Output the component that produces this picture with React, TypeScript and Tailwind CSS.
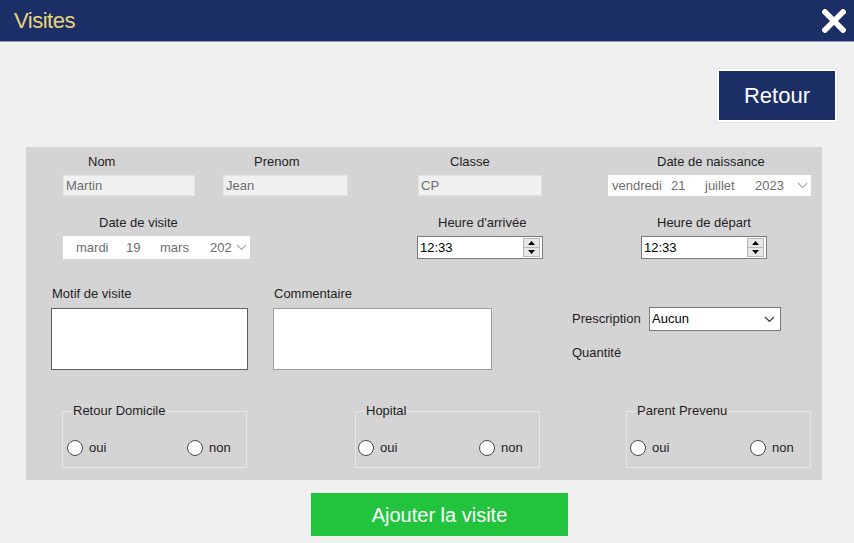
import React from 'react';

const font = { fontFamily: '"Liberation Sans", Arial, sans-serif' };

function Chevron({ className }: { className?: string }) {
  return (
    <svg width="11" height="7" viewBox="0 0 11 7" className={className}>
      <path d="M1 1l4.5 4.5L10 1" fill="none" stroke="currentColor" strokeWidth="1.1" />
    </svg>
  );
}

function Spinner() {
  return (
    <div className="flex flex-col w-[17px] h-[19px] border border-[#b9b9b9] bg-[#e6e6e6] mr-[2px]">
      <div className="flex-1 flex items-center justify-center border-b border-[#b9b9b9]">
        <svg width="7" height="4" viewBox="0 0 7 4"><path d="M0 4L3.5 0L7 4z" fill="#000" /></svg>
      </div>
      <div className="flex-1 flex items-center justify-center">
        <svg width="7" height="4" viewBox="0 0 7 4"><path d="M0 0L3.5 4L7 0z" fill="#000" /></svg>
      </div>
    </div>
  );
}

function Label({ children, pl }: { children: React.ReactNode; pl: string }) {
  return <div className={`h-[16px] leading-[16px] text-[13px] text-[#1e1e1e] whitespace-nowrap ${pl}`}>{children}</div>;
}

function ReadonlyBox({ value }: { value: string }) {
  return (
    <div className="mt-[5px] h-[21px] bg-[#f0f0f0] border border-[#e2e2e2] text-[13px] leading-[19px] pl-[2px] text-[#6d6d6d]">
      {value}
    </div>
  );
}

function Radio({ label }: { label: string }) {
  return (
    <div className="flex items-center gap-[6px] h-[16px]">
      <span className="w-[16px] h-[16px] rounded-full bg-white border border-[#4a4a4a]" />
      <span className="text-[13px] text-[#1e1e1e]">{label}</span>
    </div>
  );
}

function Groupe({ titre, ml, ouiX }: { titre: string; ml: string; ouiX: string }) {
  return (
    <fieldset className={`${ml} w-[185px] h-[65px] border border-[#e6e6e6]`}>
      <legend className="ml-[9px] px-[1px] text-[13px] leading-[16px] text-[#1e1e1e]">{titre}</legend>
      <div className="flex mt-[21px]">
        <div className={ouiX}><Radio label="oui" /></div>
        <Radio label="non" />
      </div>
    </fieldset>
  );
}

export default function App() {
  return (
    <div className="w-[854px] h-[543px] bg-[#f0f0f0] flex flex-col overflow-hidden" style={font}>
      {/* Barre de titre */}
      <div className="h-[42px] bg-[#1b2f66] border-b border-[#8d9bc0] flex items-center justify-between pl-[14px] pr-[8px] shrink-0">
        <span className="text-[22px] text-[#e9d37c] leading-none tracking-[-0.5px]">Visites</span>
        <svg width="24" height="24" viewBox="0 0 24 24">
          <path d="M3 3L21 21M21 3L3 21" stroke="#fff" strokeWidth="5.5" strokeLinecap="square" />
        </svg>
      </div>

      <div className="flex justify-end pt-[27px] pr-[17px]">
        <button className="w-[120px] h-[53px] border-2 border-white bg-[#1b2f66] text-white text-[22px] leading-none shadow-[0_0_0_1px_#e4e4e4]">
          Retour
        </button>
      </div>

      {/* Panneau */}
      <div className="ml-[26px] mt-[25px] w-[796px] h-[333px] bg-[#d4d4d4] pt-[7px] flex flex-col shrink-0">
        {/* Ligne 1 */}
        <div className="flex">
          <div className="ml-[37px] w-[132px]">
            <Label pl="pl-[25px]">Nom</Label>
            <ReadonlyBox value="Martin" />
          </div>
          <div className="ml-[28px] w-[125px]">
            <Label pl="pl-[31px]">Prenom</Label>
            <ReadonlyBox value="Jean" />
          </div>
          <div className="ml-[70px] w-[124px]">
            <Label pl="pl-[32px]">Classe</Label>
            <ReadonlyBox value="CP" />
          </div>
          <div className="ml-[66px] w-[203px]">
            <Label pl="pl-[49px]">Date de naissance</Label>
            <div className="mt-[5px] h-[21px] bg-white flex items-center text-[13px] text-[#6d6d6d] whitespace-nowrap">
              <span className="ml-[4px] w-[59px]">vendredi</span>
              <span className="w-[34px]">21</span>
              <span className="w-[50px]">juillet</span>
              <span className="w-[36px]">2023</span>
              <Chevron className="ml-[6px] text-[#a9a9a9]" />
            </div>
          </div>
        </div>

        {/* Ligne 2 */}
        <div className="flex mt-[19px]">
          <div className="ml-[37px] w-[187px]">
            <Label pl="pl-[36px]">Date de visite</Label>
            <div className="mt-[5px] h-[23px] bg-white flex items-center text-[13px] text-[#6d6d6d] whitespace-nowrap">
              <span className="ml-[13px] w-[50px]">mardi</span>
              <span className="w-[34px]">19</span>
              <span className="w-[50px]">mars</span>
              <span className="w-[24px]">202</span>
              <Chevron className="ml-[2px] text-[#a9a9a9]" />
            </div>
          </div>
          <div className="ml-[167px] w-[126px]">
            <Label pl="pl-[21px]">Heure d'arrivée</Label>
            <div className="mt-[5px] h-[23px] bg-white border border-[#7a7a7a] flex items-center justify-between text-[13px] text-black">
              <span className="pl-[2px]">12:33</span>
              <Spinner />
            </div>
          </div>
          <div className="ml-[98px] w-[126px]">
            <Label pl="pl-[16px]">Heure de départ</Label>
            <div className="mt-[5px] h-[23px] bg-white border border-[#7a7a7a] flex items-center justify-between text-[13px] text-black">
              <span className="pl-[2px]">12:33</span>
              <Spinner />
            </div>
          </div>
        </div>

        {/* Ligne 3 */}
        <div className="flex mt-[27px]">
          <div className="ml-[25px] w-[197px]">
            <Label pl="pl-[1px]">Motif de visite</Label>
            <div className="mt-[6px] h-[62px] bg-white border border-[#5f5f5f]" />
          </div>
          <div className="ml-[25px] w-[219px]">
            <Label pl="pl-[1px]">Commentaire</Label>
            <div className="mt-[6px] h-[62px] bg-white border border-[#9e9e9e]" />
          </div>
          <div className="ml-[80px] flex flex-col">
            <div className="flex items-center mt-[21px]">
              <span className="w-[77px] text-[13px] text-[#1e1e1e]">Prescription</span>
              <div className="w-[132px] h-[24px] bg-white border border-[#7a7a7a] flex items-center justify-between text-[13px] text-black">
                <span className="pl-[2px]">Aucun</span>
                <Chevron className="mr-[5px] text-[#333]" />
              </div>
            </div>
            <div className="mt-[14px] h-[16px] leading-[16px] text-[13px] text-[#1e1e1e]">Quantité</div>
          </div>
        </div>

        {/* Ligne 4 */}
        <div className="flex mt-[33px]">
          <Groupe titre="Retour Domicile" ml="ml-[36px]" ouiX="ml-[4px] w-[120px]" />
          <Groupe titre="Hopital" ml="ml-[108px]" ouiX="ml-[2px] w-[121px]" />
          <Groupe titre="Parent Prevenu" ml="ml-[86px]" ouiX="ml-[3px] w-[120px]" />
        </div>
      </div>

      <div className="mt-[13px] ml-[311px]">
        <button className="w-[257px] h-[43px] bg-[#22c43e] text-white text-[20px] leading-none">
          Ajouter la visite
        </button>
      </div>
    </div>
  );
}
